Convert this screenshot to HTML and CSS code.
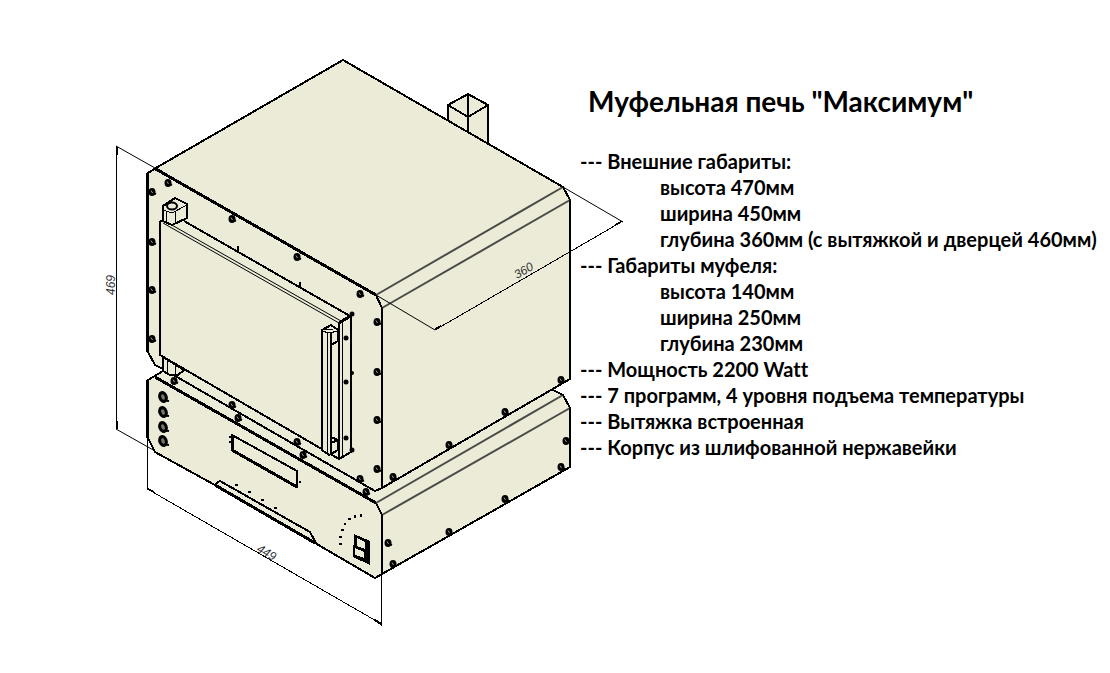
FILE: index.html
```html
<!DOCTYPE html>
<html lang="ru">
<head>
<meta charset="utf-8">
<title>Муфельная печь "Максимум"</title>
<link rel="stylesheet" href="styles.css">
</head>
<body>
<main class="sheet">
  <svg class="drawing" viewBox="0 0 580 673" role="img" aria-label="Чертёж муфельной печи с размерами 469, 449 и 360">
    <defs>
      <g id="screw"><ellipse rx="3.500" ry="4" class="screw"/><path d="M1 1l3 1" class="edge"/><path d="M-1 -1.500l1.500 2.500" class="glint"/></g>
      <g id="ring"><ellipse rx="3.200" ry="4.500" class="ring" transform="rotate(-20)"/><path d="M1 3.500l5 .5" class="edge"/></g>
    </defs>

    <!-- flue -->
    <path class="body" d="M448 105L468 94L488 105V144L448 121Z"/>
    <path class="edge" d="M448 105L468 117L488 105M468 94V133"/>

    <!-- control unit -->
    <path class="body" d="M148 380L163 371L553 390L563 395L570 408V467L382 574L375 578L315 543L213 484L155 452L148 438Z"/>
    <path class="bold" d="M155 377L376 503M147.500 380V438"/>
    <path class="edge" d="M376 503L382 515V574"/>
    <path class="chamfer" d="M376 503L563 395M382 515L570 408"/>

    <!-- chamber -->
    <path class="body" d="M148 173L155 168.500L343 60L563 187L570 200V379L382 488L375 491L177 377L163 369L155 365L148 352Z"/>
    <path class="bold" d="M155 168.500L376 295M147.500 173V352"/>
    <path class="edge" d="M376 295L382 308V488"/>
    <path class="chamfer" d="M376 295L563 187M382 308L570 200"/>

    <!-- lower hinge -->
    <path class="body" d="M163 357V371L170 375L178 375L184 370Z"/>
    <path class="thin" d="M167 359V373M175 363V374"/>

    <!-- door -->
    <path class="face" d="M160 220L184 221L351 316V452L339 459L160 355Z"/>
    <path class="edge" d="M184 221L350 316M163 220L160 222V355L339 459L351 452V315L339 323V459M238 246V252M300 282V288"/>
    <path class="fine" d="M163 223L339 323M170 224L341 321"/>
    <path class="thin" d="M342 323V456"/>
    <path class="bold" d="M339 323L352 315"/>

    <!-- upper hinge -->
    <path class="body" d="M163 206L175 198L187 204V218L172 225L163 221Z"/>
    <path class="thin" d="M163 210L172 213L187 205M166 211V222M175 212V224"/>
    <ellipse class="edge smooth" cx="172" cy="206" rx="5" ry="3.500"/>

    <!-- handle -->
    <path class="body" d="M322 330L331 325L338 330V450L329 455L322 450Z"/>
    <path class="thin" d="M322 331L329 333L338 331M327 333V454M325 329L333 330"/>
    <path class="face" d="M331 345L338 341V440L331 437Z"/>
    <path class="edge" d="M331 333V454M331 345L338 341M331 437L338 440L331 443"/>
    <g class="dot smooth"><circle cx="346" cy="338" r="2.500"/><circle cx="346" cy="382" r="2.500"/><circle cx="346" cy="438" r="2.500"/><circle cx="352" cy="314" r="2.500"/><circle cx="352" cy="373" r="2"/><circle cx="352" cy="450" r="2.500"/></g>

    <!-- display, tray, switch -->
    <path class="edge" d="M232 435L297 471V487L232 450Z"/>
    <path class="bold" d="M232 435V450L297 487"/>
    <path class="dot" d="M229 436h3v2h-3zM229 441h3v2h-3zM299 481h2v2h-2z"/>
    <path class="edge" d="M215 484L220 481L310 532L316 543"/>
    <path class="bold" d="M215 485L315 543"/>
    <path class="dot" d="M235 484h3v2h-3zM248 491h3v2h-3zM261 499h3v2h-3zM274 507h3v2h-3zM360 514h2v3h-2zM354 515h2v3h-2zM348 518h3v2h-3zM344 523h2v2h-2zM341 529h3v2h-3zM339 536h3v2h-3zM339 543h3v2h-3z"/>
    <path class="dot" d="M354 534L370 541V565L353 557Z"/>
    <path class="face" d="M357 538L365 542V549L357 546ZM355 548L364 552V558L355 555Z"/>

    <!-- fasteners -->
    <g class="smooth">
    <use href="#screw" x="152" y="192"/><use href="#screw" x="152" y="242"/><use href="#screw" x="152" y="290"/><use href="#screw" x="152" y="339"/>
    <use href="#screw" x="168" y="183"/><use href="#screw" x="232" y="219"/><use href="#screw" x="297" y="257"/><use href="#screw" x="360" y="294"/>
    <use href="#screw" x="377" y="322"/><use href="#screw" x="377" y="372"/><use href="#screw" x="377" y="420"/><use href="#screw" x="377" y="469"/>
    <use href="#screw" x="174" y="381"/><use href="#screw" x="232" y="405"/><use href="#screw" x="238" y="418"/><use href="#screw" x="297" y="442"/>
    <use href="#screw" x="303" y="455"/><use href="#screw" x="360" y="479"/><use href="#screw" x="366" y="492"/>
    <use href="#screw" x="393" y="477"/><use href="#screw" x="449" y="445"/><use href="#screw" x="505" y="412"/><use href="#screw" x="561" y="380"/>
    <use href="#screw" x="566" y="441"/><use href="#screw" x="561" y="467"/><use href="#screw" x="505" y="499"/><use href="#screw" x="449" y="532"/>
    <use href="#screw" x="393" y="564"/><use href="#screw" x="388" y="543"/>
    <use href="#ring" x="163" y="397"/><use href="#ring" x="163" y="412"/><use href="#ring" x="163" y="427"/><use href="#ring" x="163" y="441"/>
    </g>

    <!-- dimensions -->
    <path class="thin" d="M116.500 146V429M147.500 438V489L381.500 624M381.500 574V626M435 330L623 221"/>
    <path class="fine" d="M116 146L155 168M116 429L155 451M376 295L435 330M563 187L623 222"/>
    <path class="edge" d="M117 147V155M117 421V429M148 489L154 492M375 620L381 624M435 329L441 326M615 225L621 222"/>
    <text class="size" transform="translate(115 295) rotate(-90)">469</text>
    <text class="size" transform="translate(256 551) rotate(30)">449</text>
    <text class="size" transform="translate(517 279) rotate(-30)">360</text>
  </svg>

  <section class="specs">
    <h1 class="title">Муфельная печь "Максимум"</h1>
    <ul class="list">
      <li>--- Внешние габариты:
        <ul class="sublist">
          <li>высота 470мм</li>
          <li>ширина 450мм</li>
          <li>глубина 360мм (с вытяжкой и дверцей 460мм)</li>
        </ul>
      </li>
      <li>--- Габариты муфеля:
        <ul class="sublist">
          <li>высота 140мм</li>
          <li>ширина 250мм</li>
          <li>глубина 230мм</li>
        </ul>
      </li>
      <li>--- Мощность 2200 Watt</li>
      <li>--- 7 программ, 4 уровня подъема температуры</li>
      <li>--- Вытяжка встроенная</li>
      <li>--- Корпус из шлифованной нержавейки</li>
    </ul>
  </section>
</main>
</body>
</html>
```
FILE: styles.css
```css
body {
  margin: 0;
  background: #fff;
  color: #000;
  font-family: Lato, "Open Sans", sans-serif;
  font-weight: 700;
  font-variant-ligatures: none;
}

.sheet {
  display: grid;
  grid-template-columns: minmax(0, 58fr) minmax(0, 53fr);
  align-items: start;
}

.drawing {
  display: block;
  width: 100%;
  overflow: visible;
  shape-rendering: crispEdges;
}

.specs {
  padding-top: 83px;
  white-space: nowrap;
}

.title {
  margin: 0 0 29px;
  padding-left: 8px;
  font-size: 28px;
  line-height: 36px;
}

.list,
.sublist {
  margin: 0;
  padding: 0;
  list-style: none;
  font-size: 20px;
  line-height: 26px;
}

.sublist {
  padding-left: 80px;
}

.body,
.face {
  fill: #ebebd7;
}

.body,
.edge,
.bold,
.chamfer,
.fine,
.thin {
  stroke: #000;
  stroke-width: 2;
}

.edge,
.bold,
.chamfer,
.fine,
.thin {
  fill: none;
}

.bold {
  stroke-width: 3;
}

.fine,
.thin {
  stroke-width: 1;
}

.chamfer {
  stroke-width: 2;
  stroke: #222;
  shape-rendering: geometricPrecision;
  stroke-opacity: 0.8;
}

.fine {
  shape-rendering: geometricPrecision;
}

.smooth {
  shape-rendering: geometricPrecision;
}

.dot {
  fill: #000;
}

.screw {
  fill: #000;
}

.glint {
  stroke: #a0a090;
}

.ring {
  fill: #77776c;
  stroke: #000;
  stroke-width: 3;
}

.size {
  fill: #333;
  font: italic 12px "Liberation Sans", sans-serif;
}
```
